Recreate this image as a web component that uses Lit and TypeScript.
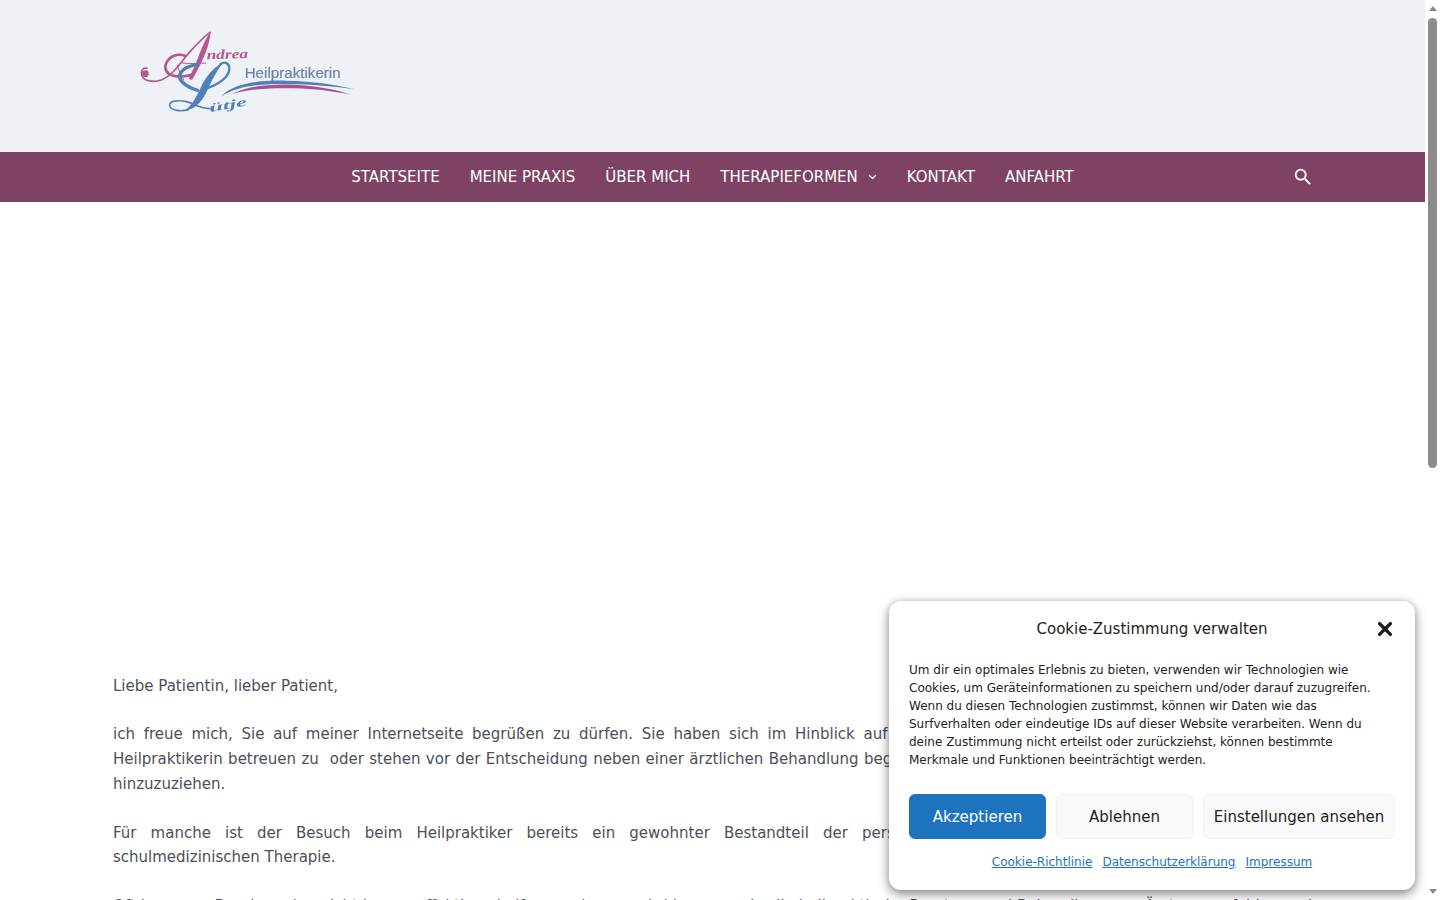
import { LitElement, html, css, svg } from "lit";
import { customElement } from "lit/decorators.js";

const logo = svg`
<g transform="translate(105 75)" fill="none" stroke-linecap="round" stroke-linejoin="round">
  <g stroke="#b5568e">
    <circle cx="31" cy="146" r="10" fill="#b5568e" stroke="none"/>
    <path stroke-width="5" d="M36 130c-12-4-20 8-15 22 6 16 34 22 60 12 34-14 54-50 84-84 20-22 40-44 60-58"/>
    <path stroke-width="8" d="M150 92c-22-8-46 2-56 22-8 16 0 32 20 38 22 5 44 2 62-4"/>
    <path stroke-width="3" d="M128 122c4 16 8 30 18 42M140 114c24 2 48 2 72 0"/>
  </g>
  <path fill="#b5568e" d="M227 20c-2 36-20 84-56 144l-10-2c12-26 24-50 32-74 10-26 20-50 34-68z"/>
  <g stroke="#4f80ba">
    <path stroke-width="10" d="M190 118c-30 4-52 16-56 34-2 18 24 34 54 44"/>
    <path stroke-width="7" d="M255 118c14-10 28-4 28 14 0 22-30 46-68 58"/>
    <path stroke-width="5" d="M160 254c-20 6-52 4-56-12-2-14 24-18 50-12 24 6 46 26 80 20"/>
  </g>
  <path fill="#4f80ba" d="M262 114c-28 14-50 42-64 72-14 30-26 54-48 70 28-2 48-24 62-50 14-30 28-60 50-92z"/>
</g>
<path fill="#4f80ba" d="M363 290c34-40 114-50 197-48 80 2 150 12 205 26-60-9-130-15-205-16-82-1-150 6-197 38z"/>
<path fill="#a9508c" d="M393 283c46-24 116-32 187-29 70 3 128 14 172 30-52-11-108-17-172-19-70-2-134 2-187 18z"/>
<text class="script" x="320" y="178" font-size="40" textLength="125" lengthAdjust="spacingAndGlyphs" fill="#b5568e" transform="rotate(-2 320 178)">ndrea</text>
<text class="script" x="330" y="336" font-size="36" textLength="114" lengthAdjust="spacingAndGlyphs" fill="#4f80ba" transform="rotate(-10 330 336)">ütje</text>
<text class="sans" x="434" y="233" font-size="45" textLength="288" lengthAdjust="spacingAndGlyphs" fill="#6a84ad" stroke="#6a84ad" stroke-width="0.6">Heilpraktikerin</text>
`;

@customElement("app-root")
export class AppRoot extends LitElement {
  static styles = css`
    :host {
      display: flex;
      width: 1440px;
      height: 900px;
      overflow: hidden;
      position: relative;
      background: #fff;
      font-family: "DejaVu Sans", sans-serif;
      color: #4b4f58;
    }
    .page { width: 1425px; height: 900px; overflow: hidden; flex: none; }
    .top { height: 152px; background: #eef2f7; padding-left: 100px; }
    .logo { display: block; width: 300px; height: 150px; filter: blur(0.6px); }
    .script { font-family: "Liberation Serif", serif; font-style: italic; font-weight: 700; }
    .sans { font-family: "Liberation Sans", sans-serif; }
    .nav {
      height: 50px;
      background: #7e4364;
      display: grid;
      grid-template-columns: 1fr auto 1fr;
      align-items: center;
      color: #fff;
      font-size: 15px;
    }
    .menu { grid-column: 2; display: flex; gap: 30px; align-items: center; }
    .menu span { display: flex; align-items: center; gap: 10px; }
    .search { grid-column: 3; justify-self: end; margin-right: 111px; display: flex; }
    .hero { height: 472px; }
    .content {
      padding: 0 113px;
      font-size: 15px;
      line-height: 24.65px;
      display: flex;
      flex-direction: column;
    }
    .line { white-space: nowrap; }
    .j { text-align: justify; text-align-last: justify; white-space: normal; }
    .p2 { margin-top: 23.7px; }
    .p3 { margin-top: 24.5px; }
    .p4 { margin-top: 24px; }
    .bar { width: 15px; height: 900px; flex: none; background: #fff; position: relative; display: flex; flex-direction: column; align-items: center; }
    .up { width: 0; height: 0; border: 4.5px solid transparent; border-top: 0; border-bottom: 5px solid #8a8a8a; margin-top: 6px; }
    .thumb { width: 9px; height: 450px; margin-top: 7px; background: #8c8c8c; border-radius: 5px; }
    .down { width: 0; height: 0; border: 4.5px solid transparent; border-bottom: 0; border-top: 5px solid #8a8a8a; margin-top: auto; margin-bottom: 6px; }
    .modal {
      position: absolute;
      left: 889px;
      top: 601px;
      width: 526px;
      height: 289px;
      box-sizing: border-box;
      background: #fff;
      border-radius: 12px;
      box-shadow: 0 4px 12px rgba(0, 0, 0, 0.45), 0 0 6px rgba(0, 0, 0, 0.12);
      padding: 18px 20px 0;
      color: #222;
      display: flex;
      flex-direction: column;
    }
    .head { display: grid; grid-template-columns: 1fr auto 1fr; align-items: center; height: 20px; font-size: 15px; }
    .title { grid-column: 2; white-space: nowrap; }
    .close { grid-column: 3; justify-self: end; display: flex; margin-right: 2px; }
    .msg { font-size: 12px; line-height: 18px; margin-top: 22px; }
    .msg div { white-space: nowrap; }
    .btns { display: flex; gap: 10px; margin-top: 25px; }
    .btn {
      height: 45px;
      box-sizing: border-box;
      display: flex;
      align-items: center;
      justify-content: center;
      border-radius: 6px;
      font-size: 15px;
      background: #f9f9f9;
      border: 1px solid #f2f2f2;
      color: #222;
      width: 137px;
      white-space: nowrap;
    }
    .btn.primary { background: #1e73be; border-color: #1e73be; color: #fff; }
    .btn.wide { width: 192px; }
    .links { display: flex; justify-content: center; gap: 10px; margin-top: 14px; font-size: 12px; line-height: 18px; }
    .links a { color: #1e73be; text-decoration: underline; }
  `;

  render() {
    return html`
      <div class="page">
        <header class="top">
          <svg class="logo" viewBox="0 0 900 450">${logo}</svg>
        </header>
        <nav class="nav">
          <div class="menu">
            <span>STARTSEITE</span>
            <span>MEINE PRAXIS</span>
            <span>ÜBER MICH</span>
            <span>THERAPIEFORMEN
              <svg width="9" height="6" viewBox="0 0 9 6"><path d="M1 1l3.5 3.5L8 1" fill="none" stroke="#fff" stroke-width="1.2"/></svg>
            </span>
            <span>KONTAKT</span>
            <span>ANFAHRT</span>
          </div>
          <div class="search">
            <svg width="22" height="22" viewBox="0 0 24 24"><path fill="#fff" d="M15.5 14h-.79l-.28-.27A6.471 6.471 0 0 0 16 9.5 6.5 6.5 0 1 0 9.5 16c1.61 0 3.09-.59 4.23-1.57l.27.28v.79l5 4.99L20.49 19l-4.99-5zm-6 0C7.01 14 5 11.99 5 9.5S7.01 5 9.5 5 14 7.01 14 9.5 11.99 14 9.5 14z"/></svg>
          </div>
        </nav>
        <div class="hero"></div>
        <main class="content">
          <div class="line">Liebe Patientin, lieber Patient,</div>
          <div class="line j p2">ich freue mich, Sie auf meiner Internetseite begrüßen zu dürfen. Sie haben sich im Hinblick auf Ihre Gesundheit dafür entschieden, sich von mir als</div>
          <div class="line j">Heilpraktikerin betreuen zu&nbsp; oder stehen vor der Entscheidung neben einer ärztlichen Behandlung begleitend eine naturheilkundliche Therapie oder Beratung</div>
          <div class="line">hinzuzuziehen.</div>
          <div class="line j p3">Für manche ist der Besuch beim Heilpraktiker bereits ein gewohnter Bestandteil der persönlichen Gesundheitsvorsorge oder Ergänzung zur</div>
          <div class="line">schulmedizinischen Therapie.</div>
          <div class="line j p4">Oft kann von Beschwerden nicht immer effektiv geholfen werden, so wird immer mehr die heilpraktische Beratung und Behandlung von Ärzten empfohlen und angeraten.</div>
        </main>
      </div>
      <div class="bar" aria-hidden="true">
        <div class="up"></div>
        <div class="thumb"></div>
        <div class="down"></div>
      </div>
      <aside class="modal">
        <div class="head">
          <div class="title">Cookie-Zustimmung verwalten</div>
          <div class="close">
            <svg width="16" height="16" viewBox="0 0 16 16"><path d="M2.6 2.6l10.8 10.8M13.4 2.6L2.6 13.4" stroke="#1a1a1a" stroke-width="3.4" stroke-linecap="round"/></svg>
          </div>
        </div>
        <div class="msg">
          <div>Um dir ein optimales Erlebnis zu bieten, verwenden wir Technologien wie</div>
          <div>Cookies, um Geräteinformationen zu speichern und/oder darauf zuzugreifen.</div>
          <div>Wenn du diesen Technologien zustimmst, können wir Daten wie das</div>
          <div>Surfverhalten oder eindeutige IDs auf dieser Website verarbeiten. Wenn du</div>
          <div>deine Zustimmung nicht erteilst oder zurückziehst, können bestimmte</div>
          <div>Merkmale und Funktionen beeinträchtigt werden.</div>
        </div>
        <div class="btns">
          <div class="btn primary">Akzeptieren</div>
          <div class="btn">Ablehnen</div>
          <div class="btn wide">Einstellungen ansehen</div>
        </div>
        <div class="links">
          <a>Cookie-Richtlinie</a>
          <a>Datenschutzerklärung</a>
          <a>Impressum</a>
        </div>
      </aside>
    `;
  }
}
